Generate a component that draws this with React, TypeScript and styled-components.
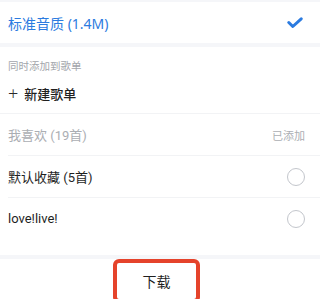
import React from "react";
import styled, { createGlobalStyle } from "styled-components";

const Global = createGlobalStyle`
  html, body { margin: 0; padding: 0; background: #fff; }
  body { font-family: "Noto Sans", "Noto Sans CJK SC", sans-serif; -webkit-font-smoothing: antialiased; }
`;

const Page = styled.div`
  width: 320px;
  height: 299px;
  overflow: hidden;
  display: flex;
  flex-direction: column;
  background: #fff;
  & > * { flex-shrink: 0; }
`;

const Band = styled.div<{ $h: number }>`
  height: ${(p) => p.$h}px;
  background: #f5f6f9;
`;

const QualityRow = styled.div`
  height: 41px;
  display: flex;
  align-items: center;
  justify-content: space-between;
  padding: 0 17px 0 8px;
  color: #2b7be0;
  font-size: 14px;
`;

const SectionTitle = styled.div`
  padding: 12px 8px 0;
  font-size: 10.5px;
  line-height: 14px;
  color: #a3a6ab;
`;

const NewRow = styled.div`
  height: 40px;
  display: flex;
  align-items: center;
  gap: 6px;
  padding: 0 8px;
  font-size: 13px;
  font-weight: 500;
  color: #1f1f1f;
  border-bottom: 1px solid #f2f3f5;
`;

const List = styled.div`
  padding-left: 8px;
  padding-bottom: 16px;
`;

const Row = styled.div<{ $last?: boolean; $muted?: boolean }>`
  height: 41px;
  display: flex;
  align-items: center;
  justify-content: space-between;
  padding-right: 15px;
  font-family: Roboto, "Noto Sans CJK SC", sans-serif;
  font-size: 13px;
  font-weight: 400;
  color: ${(p) => (p.$muted ? "#abaeb3" : "#1f1f1f")};
  border-bottom: ${(p) => (p.$last ? "none" : "1px solid #f2f3f5")};
`;

const Added = styled.span`
  font-size: 11px;
  color: #abaeb3;
`;

const Radio = styled.span`
  width: 16px;
  height: 16px;
  border-radius: 50%;
  border: 1.5px solid #c3c6cc;
`;

const Footer = styled.div`
  display: flex;
  justify-content: center;
  align-items: flex-start;
  padding-right: 7px;
`;

const DownloadButton = styled.button`
  width: 87px;
  height: 44px;
  border: 4px solid #e5432b;
  border-radius: 6px;
  background: #fff;
  font-family: inherit;
  font-size: 14px;
  color: #1f1f1f;
  padding: 0;
  flex: none;
`;

const Plus = styled.span`
  font-size: 18px;
  font-weight: 300;
  line-height: 1;
  color: #2a2a2a;
`;

export default function App() {
  return (
    <Page>
      <Global />
      <Band $h={2} />
      <QualityRow>
        <span>标准音质 (1.4M)</span>
        <svg width="16" height="12" viewBox="0 0 16 12">
          <polyline
            points="1.8,5.5 5.8,9.5 14.2,1.8"
            fill="none"
            stroke="#2b7be0"
            strokeWidth="3"
            strokeLinecap="round"
            strokeLinejoin="round"
          />
        </svg>
      </QualityRow>
      <Band $h={4} />
      <SectionTitle>同时添加到歌单</SectionTitle>
      <NewRow>
        <Plus>+</Plus>
        <span>新建歌单</span>
      </NewRow>
      <List>
        <Row $muted>
          <span>我喜欢 (19首)</span>
          <Added>已添加</Added>
        </Row>
        <Row>
          <span>默认收藏 (5首)</span>
          <Radio />
        </Row>
        <Row $last>
          <span>love!live!</span>
          <Radio />
        </Row>
      </List>
      <Band $h={4} />
      <Footer>
        <DownloadButton>下载</DownloadButton>
      </Footer>
    </Page>
  );
}
